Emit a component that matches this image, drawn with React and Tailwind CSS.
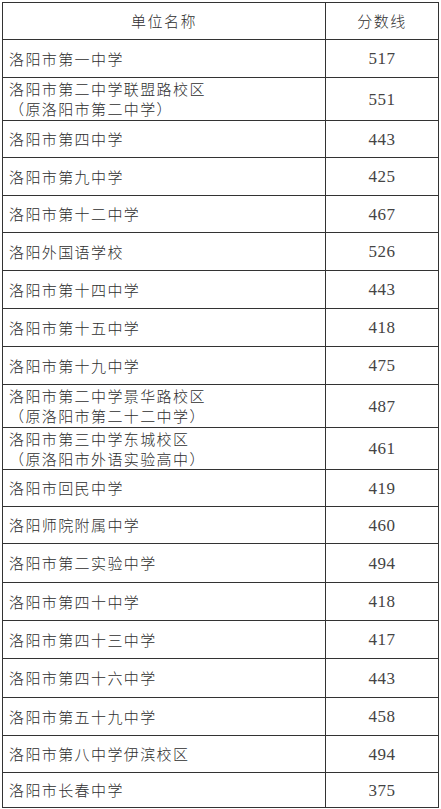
import React from "react";

const rows = [
  { name: ["洛阳市第一中学"], score: "517", h: "h-[38px]" },
  { name: ["洛阳市第二中学联盟路校区", "（原洛阳市第二中学）"], score: "551", h: "h-[43px]" },
  { name: ["洛阳市第四中学"], score: "443", h: "h-[37px]" },
  { name: ["洛阳市第九中学"], score: "425", h: "h-[38px]" },
  { name: ["洛阳市第十二中学"], score: "467", h: "h-[37px]" },
  { name: ["洛阳外国语学校"], score: "526", h: "h-[38px]" },
  { name: ["洛阳市第十四中学"], score: "443", h: "h-[38px]" },
  { name: ["洛阳市第十五中学"], score: "418", h: "h-[38px]" },
  { name: ["洛阳市第十九中学"], score: "475", h: "h-[38px]" },
  { name: ["洛阳市第二中学景华路校区", "（原洛阳市第二十二中学）"], score: "487", h: "h-[43px]" },
  { name: ["洛阳市第三中学东城校区", "（原洛阳市外语实验高中）"], score: "461", h: "h-[42px]" },
  { name: ["洛阳市回民中学"], score: "419", h: "h-[37px]" },
  { name: ["洛阳师院附属中学"], score: "460", h: "h-[37px]" },
  { name: ["洛阳市第二实验中学"], score: "494", h: "h-[39px]" },
  { name: ["洛阳市第四十中学"], score: "418", h: "h-[38px]" },
  { name: ["洛阳市第四十三中学"], score: "417", h: "h-[38px]" },
  { name: ["洛阳市第四十六中学"], score: "443", h: "h-[39px]" },
  { name: ["洛阳市第五十九中学"], score: "458", h: "h-[38px]" },
  { name: ["洛阳市第八中学伊滨校区"], score: "494", h: "h-[37px]" },
  { name: ["洛阳市长春中学"], score: "375", h: "h-[35px]" },
];

export default function App() {
  return (
    <div className="w-[441px] h-[809px] bg-white pt-[2px] pl-[2px] text-[#2e2e2e]">
      <div className="w-[437px] border-t border-l border-r border-[#333]">
        <div className="flex h-[37px] border-b border-[#333] font-['Noto_Sans_CJK_SC',sans-serif] text-[15px] font-light tracking-[1.5px]">
          <div className="w-[323px] border-r border-[#333] flex items-center justify-center">
            单位名称
          </div>
          <div className="flex-1 flex items-center justify-center">分数线</div>
        </div>
        {rows.map((r, i) => (
          <div key={i} className={`flex border-b border-[#333] ${r.h}`}>
            <div className="w-[323px] border-r border-[#333] flex flex-col justify-center pl-[6px] font-['Noto_Sans_CJK_SC',sans-serif] text-[15px] font-light tracking-[1.4px] leading-[20px]">
              {r.name.map((l, j) => (
                <div key={j} className="whitespace-nowrap">
                  {l}
                </div>
              ))}
            </div>
            <div className="flex-1 flex items-center justify-center pt-[1px] font-['Liberation_Serif',serif] text-[17px] tracking-[0.5px] text-[#444]">
              {r.score}
            </div>
          </div>
        ))}
      </div>
    </div>
  );
}
